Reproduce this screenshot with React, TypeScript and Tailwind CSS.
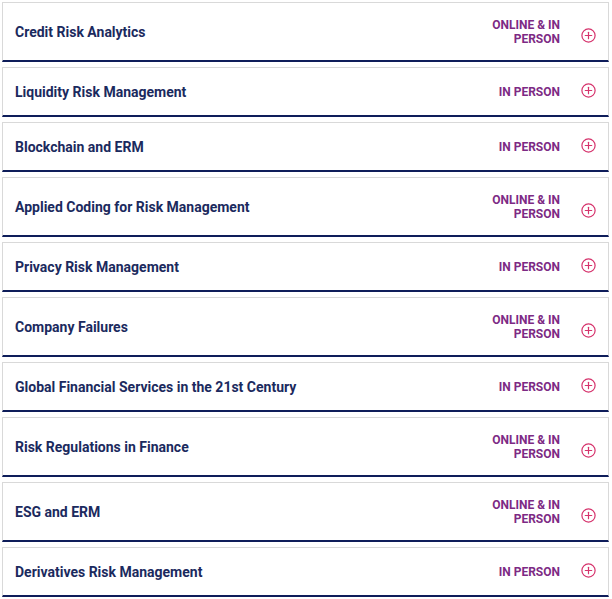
import React from "react";

const items: { title: string; tag: string }[] = [
  { title: "Credit Risk Analytics", tag: "ONLINE & IN PERSON" },
  { title: "Liquidity Risk Management", tag: "IN PERSON" },
  { title: "Blockchain and ERM", tag: "IN PERSON" },
  { title: "Applied Coding for Risk Management", tag: "ONLINE & IN PERSON" },
  { title: "Privacy Risk Management", tag: "IN PERSON" },
  { title: "Company Failures", tag: "ONLINE & IN PERSON" },
  { title: "Global Financial Services in the 21st Century", tag: "IN PERSON" },
  { title: "Risk Regulations in Finance", tag: "ONLINE & IN PERSON" },
  { title: "ESG and ERM", tag: "ONLINE & IN PERSON" },
  { title: "Derivatives Risk Management", tag: "IN PERSON" },
];

function PlusCircle() {
  return (
    <svg width="15" height="15" viewBox="0 0 15 15" fill="none" stroke="#d6336c" strokeWidth="1.2">
      <circle cx="7.5" cy="7.5" r="6.6" />
      <line x1="7.5" y1="4.3" x2="7.5" y2="10.7" strokeLinecap="round" />
      <line x1="4.3" y1="7.5" x2="10.7" y2="7.5" strokeLinecap="round" />
    </svg>
  );
}

export default function App() {
  return (
    <div className="bg-white w-[612px] h-[599px] pl-[2px] pt-[2px] flex flex-col gap-[5px]" style={{ fontFamily: "Roboto, 'Liberation Sans', sans-serif" }}>
      {items.map((it) => {
        const two = it.tag.length > 10;
        return (
          <div
            key={it.title}
            className="w-[607px] border-t border-x border-[#d9d9d9] border-b-2 border-b-[#0e1d5a] flex items-center pl-3 pr-3 py-[14.5px]"
          >
            <div className="flex-1 text-[14px] leading-[18px] font-bold text-[#1b2a5e]">{it.title}</div>
            <div className="w-[86px] text-right text-[12px] leading-[14px] font-bold text-[#7d2a84]">{it.tag}</div>
            <div className={"ml-[21px] flex items-center " + (two ? "mt-[8px]" : "mb-[3px]")}>
              <PlusCircle />
            </div>
          </div>
        );
      })}
    </div>
  );
}
